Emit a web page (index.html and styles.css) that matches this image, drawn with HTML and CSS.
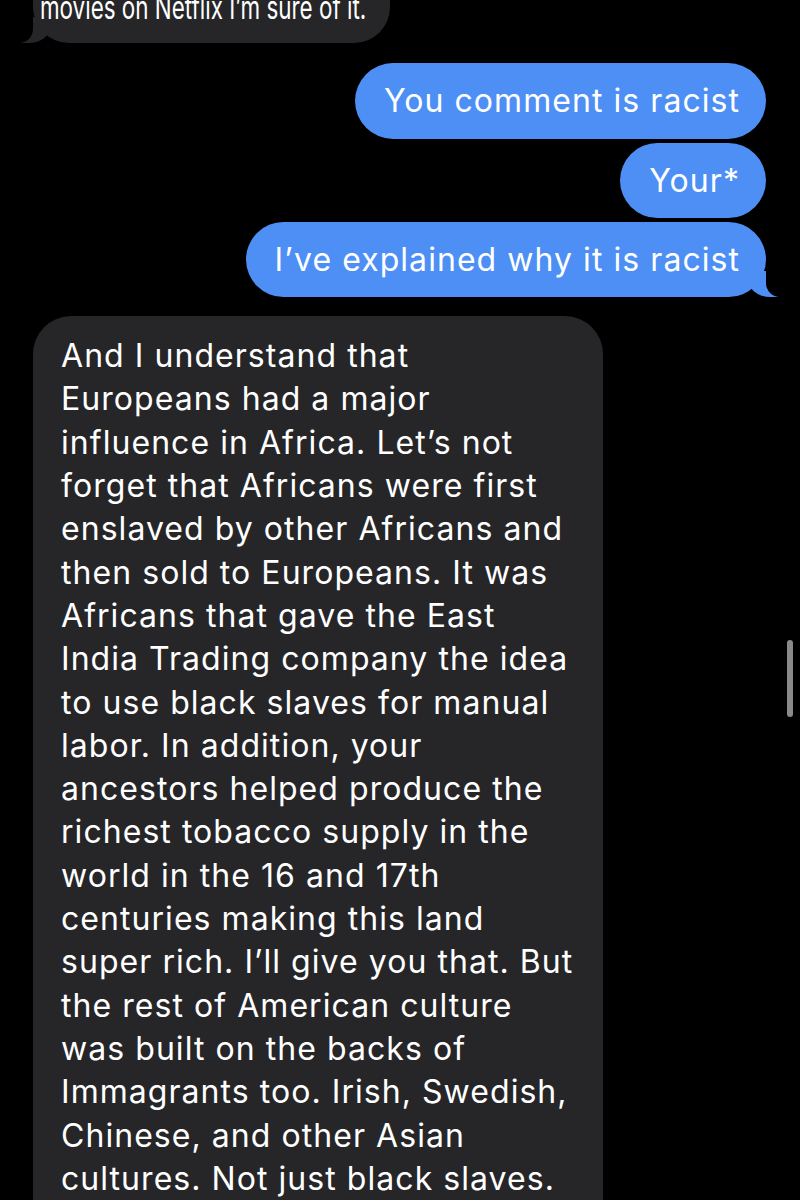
FILE: index.html
```html
<!DOCTYPE html>
<html lang="en">

<head>
  <meta charset="UTF-8">
  <meta name="viewport" content="width=device-width, initial-scale=1.0">
  <title>Messages</title>
  <link rel="stylesheet" href="styles.css">
</head>

<body>
  <main class="thread">
    <p class="bubble them first"><span>movies on Netflix I’m sure of it.</span></p>

    <div class="group me">
      <p class="bubble me">You comment is racist</p>
      <p class="bubble me">Your*</p>
      <p class="bubble me tail">I’ve explained why it is racist</p>
    </div>

    <p class="bubble them long">And I understand that<br>
      Europeans had a major<br>
      influence in Africa. Let’s not<br>
      forget that Africans were first<br>
      enslaved by other Africans and<br>
      then sold to Europeans. It was<br>
      Africans that gave the East<br>
      India Trading company the idea<br>
      to use black slaves for manual<br>
      labor. In addition, your<br>
      ancestors helped produce the<br>
      richest tobacco supply in the<br>
      world in the 16 and 17th<br>
      centuries making this land<br>
      super rich. I’ll give you that. But<br>
      the rest of American culture<br>
      was built on the backs of<br>
      Immagrants too. Irish, Swedish,<br>
      Chinese, and other Asian<br>
      cultures. Not just black slaves.</p>
  </main>

  <div class="scroll_bar"></div>
</body>

</html>
```

FILE: styles.css
```css
* {
  box-sizing: border-box;
  margin: 0;
}

html,
body {
  height: 100%;
  overflow: hidden;
}

body {
  background: #000;
  font-family: Inter, Roboto, sans-serif;
  color: #fff;
}

.thread {
  display: flex;
  flex-direction: column;
  padding: 0 34px 0 33px;
  margin-top: -40px;
}

.bubble {
  position: relative;
  font-size: 32px;
  line-height: 43.3px;
  letter-spacing: 1.05px;
  white-space: nowrap;
  border-radius: 38px;
  padding: 16px 26px 16px 29px;
}

/* 받은 메시지 */
.bubble.them {
  align-self: flex-start;
  background: #262629;
}

.bubble.first {
  width: 357px;
  padding: 26px 10px 14px 7px;
  letter-spacing: 0;
  border-radius: 0 0 36px 36px;
}

/* 윗부분이 잘려서 좁게 보임 */
.bubble.first span {
  display: inline-block;
  transform: scaleX(0.7);
  transform-origin: left center;
}

.bubble.first::before,
.bubble.long::before {
  content: "";
  position: absolute;
  bottom: 0;
  left: -12px;
  width: 30px;
  height: 26px;
  background: #262629;
  border-bottom-right-radius: 22px 18px;
}

.bubble.first::after,
.bubble.long::after {
  content: "";
  position: absolute;
  bottom: 0;
  left: -26px;
  width: 26px;
  height: 28px;
  background: #000;
  border-bottom-right-radius: 14px;
}

.bubble.long {
  width: 570px;
  margin-top: 19px;
  padding: 18px 20px 40px 28px;
}

/* 보낸 메시지 */
.group.me {
  display: flex;
  flex-direction: column;
  align-items: flex-end;
  gap: 4px;
  margin-top: 20px;
}

.bubble.me {
  background: #4d8ff5;
}

.bubble.me.tail::before {
  content: "";
  position: absolute;
  bottom: 0;
  right: -12px;
  width: 30px;
  height: 26px;
  background: #4d8ff5;
  border-bottom-left-radius: 22px 18px;
}

.bubble.me.tail::after {
  content: "";
  position: absolute;
  bottom: 0;
  right: -26px;
  width: 26px;
  height: 28px;
  background: #000;
  border-bottom-left-radius: 14px;
}

.scroll_bar {
  position: absolute;
  top: 640px;
  right: 7px;
  width: 6px;
  height: 77px;
  border-radius: 3px;
  background: #8a8a8a;
}
```
